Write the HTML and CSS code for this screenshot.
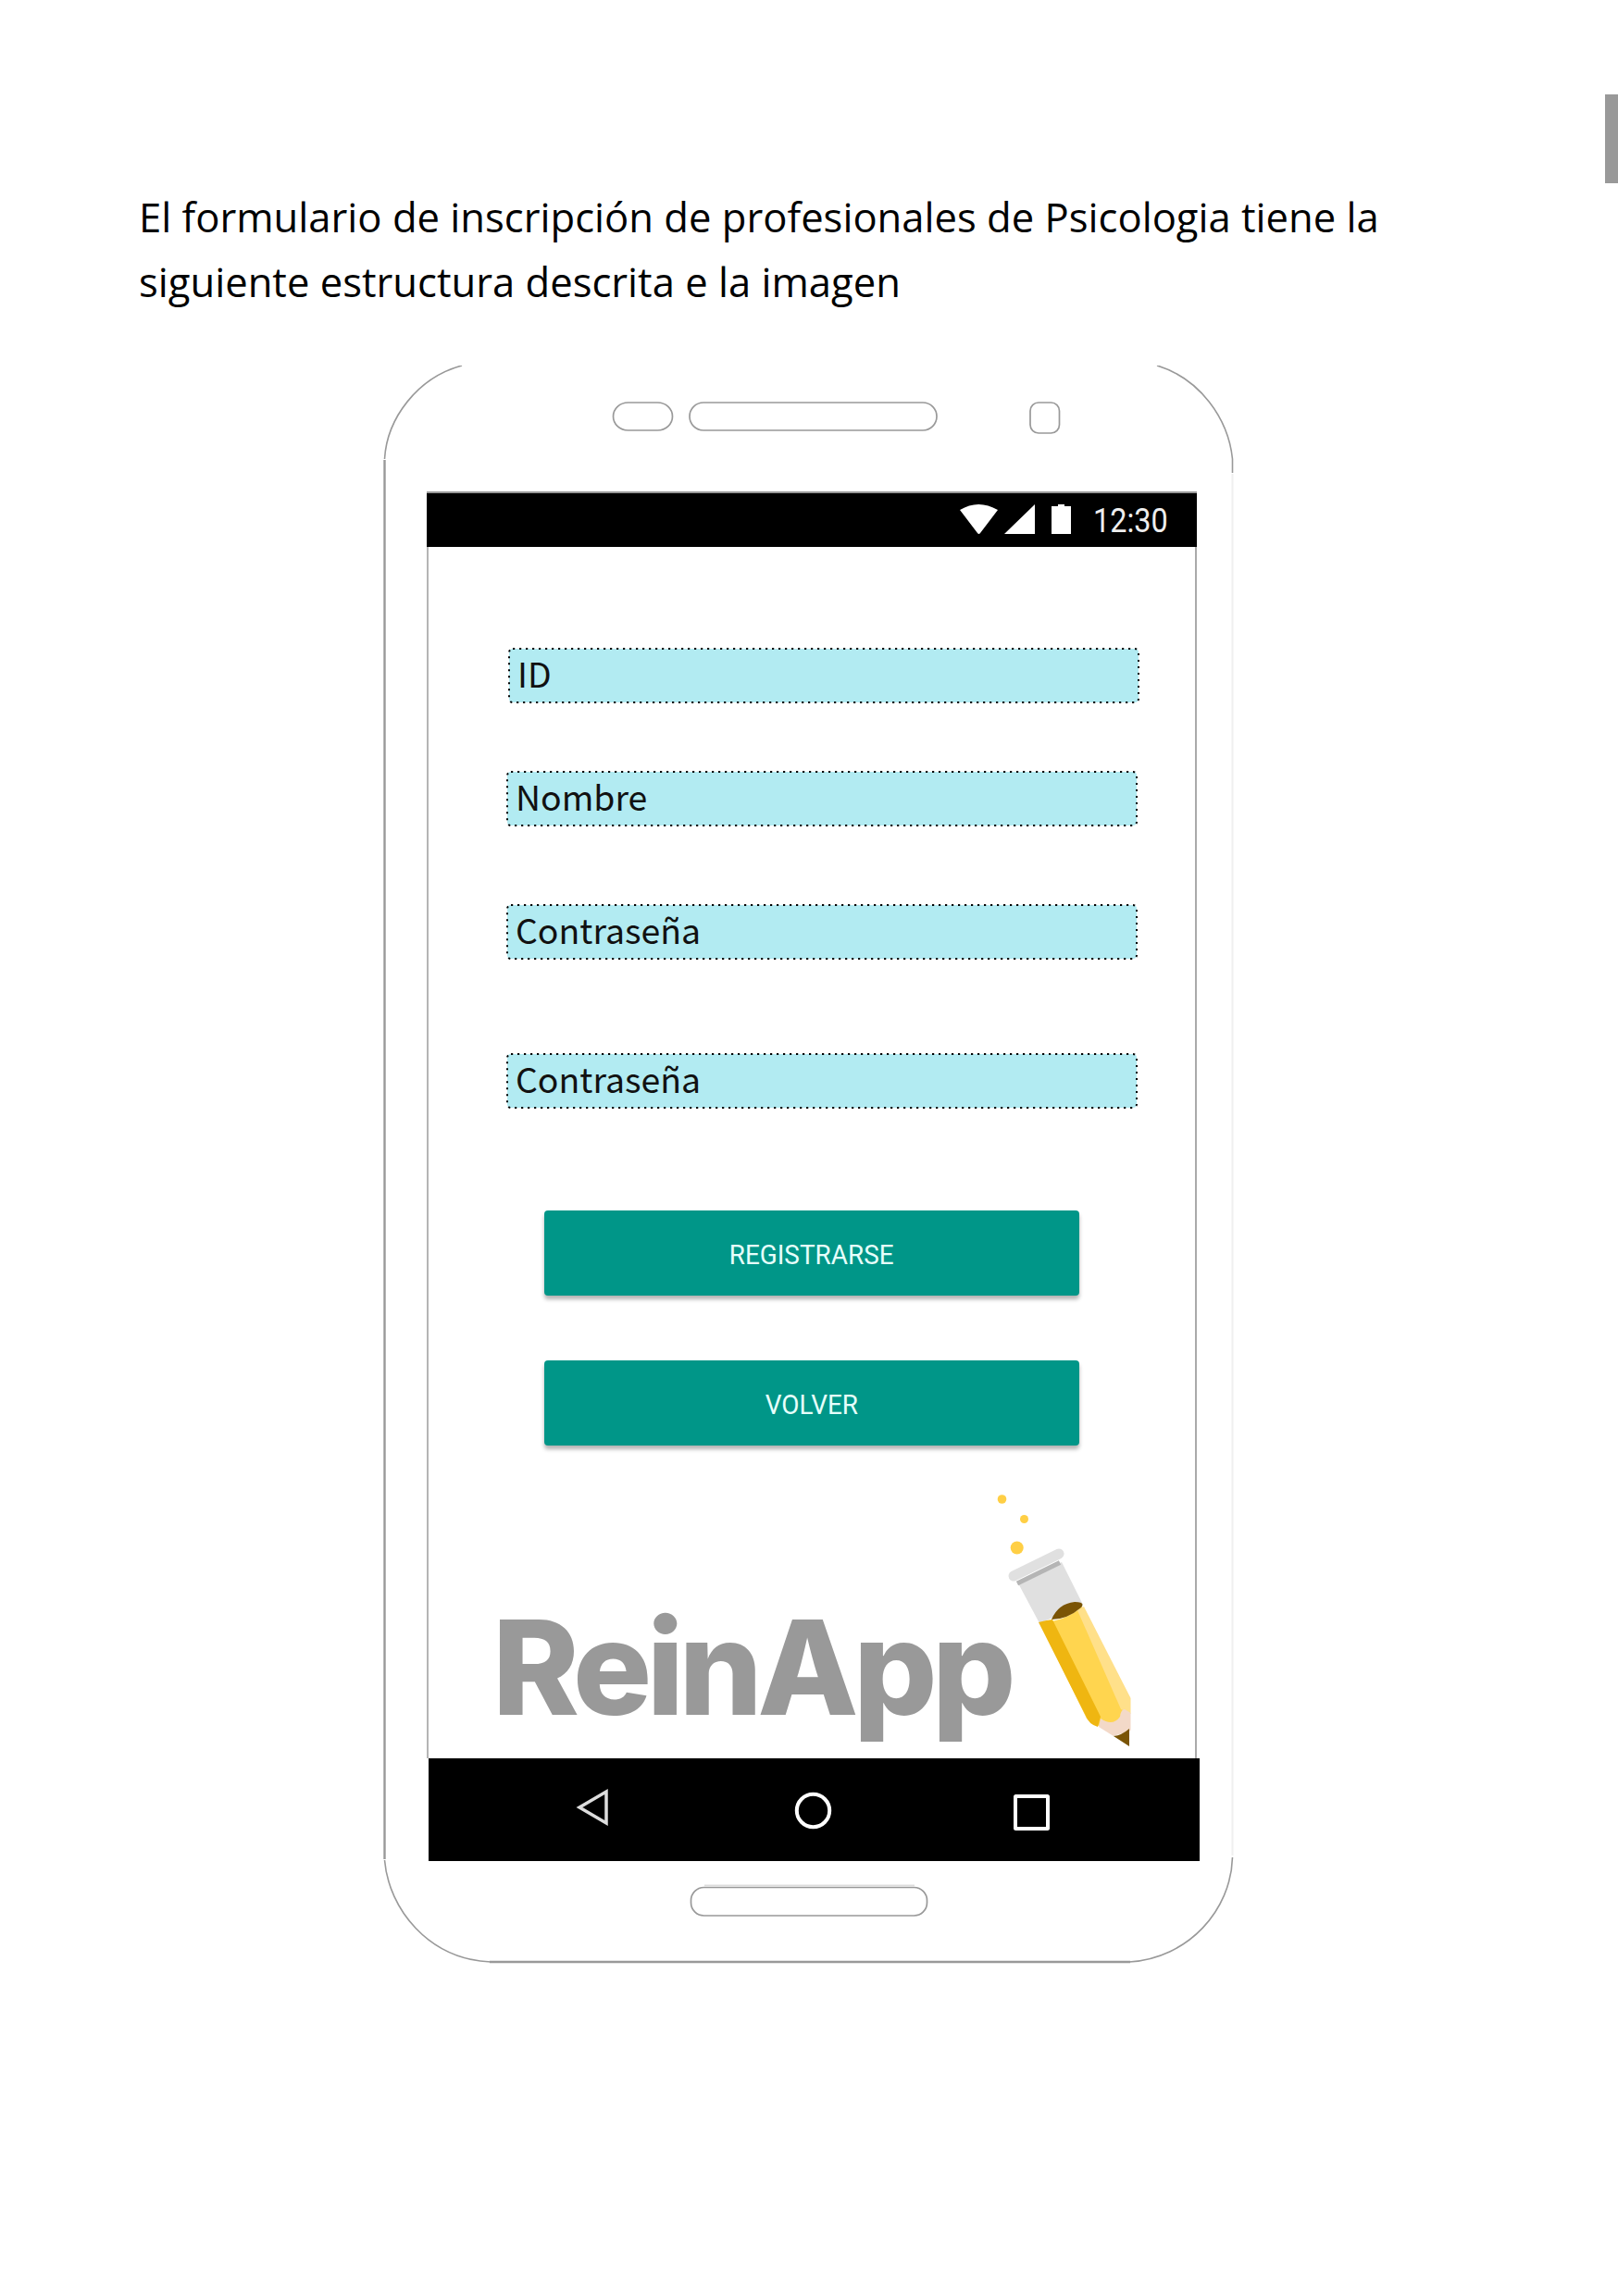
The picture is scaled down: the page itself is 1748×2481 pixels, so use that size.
FILE: index.html
```html
<!DOCTYPE html>
<html lang="es">
<head>
<meta charset="utf-8">
<title>Formulario de inscripción</title>
<link rel="stylesheet" href="styles.css">
</head>
<body>
<div class="page-tab"></div>
<p class="intro"><span class="line line-a">El formulario de inscripción de profesionales de Psicologia tiene la</span><span class="line line-b">siguiente estructura descrita e la imagen</span></p>
<main class="phone">
  <svg class="frame" width="920" height="1728" viewBox="413 395 920 1728" fill="none" stroke="#999">
    <path stroke-width="1.600" d="M499 395C451 408 418 452 415.500 496M1250 395C1296 409 1327 452 1331.500 496V511M415.500 2010C420 2063 463 2117 530 2120M1220 2120C1284 2116 1330 2064 1331.500 2007"/>
    <path stroke-width="2.400" d="M415.500 497V2009M529 2120H1221"/>
    <path stroke="#f0f0f0" stroke-width="2" d="M1331.500 512V2005"/>
    <g stroke-width="1.700">
      <rect x="662.500" y="435" width="64" height="30" rx="16" ry="15"/>
      <rect x="745" y="435" width="267" height="30" rx="15"/>
      <rect x="1113" y="435" width="31.500" height="33" rx="9"/>
      <rect x="746.500" y="2039.500" width="255" height="30.500" rx="14"/>
    </g>
    <path stroke="#ddd" stroke-width="2" d="M761 2037.500H988"/>
  </svg>
  <section class="screen">
    <header class="status">
      <svg width="121" height="32" viewBox="1037 545 121 32" fill="#fff"><path d="M1037 551Q1057 539 1078 551L1059 576Q1057.500 578 1056 576ZM1085 577L1118 545V577ZM1136 547H1143V545H1150V547H1157V577H1136Z"/></svg>
      <span class="clock">12:30</span>
    </header>
    <form class="form">
      <div class="field field-id"><svg class="edge"><rect x="1" y="1" width="680" height="58" rx="4"/></svg><span>ID</span></div>
      <div class="field field-name"><svg class="edge"><rect x="1" y="1" width="680" height="58" rx="4"/></svg><span>Nombre</span></div>
      <div class="field field-pass"><svg class="edge"><rect x="1" y="1" width="680" height="58" rx="4"/></svg><span>Contraseña</span></div>
      <div class="field field-repeat"><svg class="edge"><rect x="1" y="1" width="680" height="58" rx="4"/></svg><span>Contraseña</span></div>
      <button class="btn" type="button"><span class="label-a">REGISTRARSE</span></button>
      <button class="btn" type="button"><span class="label-b">VOLVER</span></button>
    </form>
    <div class="brand">
      <span class="wordmark">ReinApp</span>
      <svg class="pencil" width="160" height="280" viewBox="1080 1610 160 280">
        <g fill="#ffcf45"><circle cx="1082.500" cy="1620" r="4.800"/><circle cx="1106.500" cy="1641.500" r="4.500"/><circle cx="1098.700" cy="1672.500" r="7"/></g>
        <path fill="#e0e0e0" d="M1099 1709L1147 1688L1170 1734L1123 1754Z"/>
        <path stroke="#e0e0e0" stroke-width="11" stroke-linecap="round" d="M1095 1703L1144 1679"/>
        <path stroke="#b5b5b5" stroke-width="5" d="M1099 1711L1145 1688.500"/>
        <path fill="#ffd54f" d="M1123 1753Q1150 1753 1169 1736L1221 1835V1870L1187 1865L1174 1857Z"/>
        <path fill="#ffe08a" d="M1164 1740L1171 1736L1221.500 1835V1852L1211 1847Z"/>
        <path fill="#efb611" d="M1122 1753Q1129 1751 1137 1750L1189 1855L1186 1866Q1176 1863 1173 1854Z"/>
        <path fill="#f3d9c8" d="M1189 1857Q1202 1866 1210 1855Q1211 1847 1215 1847L1221.500 1851V1870L1203 1876L1187 1866Z"/>
        <path fill="#7a5405" d="M1136 1750Q1143 1733 1161 1731Q1173 1731 1168 1737Q1153 1750 1136 1750ZM1203 1876Q1212 1875 1220 1868V1887Z"/>
      </svg>
    </div>
    <nav class="nav">
      <svg width="833" height="111" viewBox="463 1900 833 111" fill="none" stroke="#fff" stroke-width="4">
        <path stroke="#ddd" stroke-width="3.500" d="M626 1953L655 1936V1970Z"/><circle cx="878.500" cy="1956.500" r="17.700"/><rect x="1097" y="1941" width="35" height="35" rx=".5"/>
      </svg>
    </nav>
  </section>
</main>
</body>
</html>
```
FILE: styles.css
```css
body {
  margin: 0;
  width: 1748px;
  height: 2481px;
  background: #fff;
  overflow: hidden;
  display: flow-root;
}
.page-tab {
  width: 14px;
  height: 96px;
  margin: 102px 0 0 auto;
  background: #999;
}
.intro {
  margin: 1px 0 0 150px;
  font: 44px/70px "Open Sans", sans-serif;
  color: #000;
}
.line {
  display: block;
  width: max-content;
  white-space: nowrap;
  transform-origin: 0 50%;
  transform: scaleX(.9905);
}
.phone {
  position: relative;
  width: 920px;
  height: 1728px;
  margin: 56px 0 0 413px;
}
.frame {
  position: absolute;
  inset: 0;
}
.screen {
  position: relative;
  margin-left: 48px;
  padding-top: 136px;
  width: 835px;
}
.status {
  box-sizing: border-box;
  width: 832px;
  height: 60px;
  border-top: 2px solid #999;
  background: #000;
  display: flex;
  align-items: flex-start;
  padding: 12px 0 0 576px;
}
.clock {
  margin: -3px 0 0 23px;
  font: 36px/42px Roboto, sans-serif;
  color: #eee;
  transform-origin: 0 50%;
  transform: scaleX(.9);
}
.form {
  box-sizing: border-box;
  width: 832px;
  height: 1009px;
  border-left: 2px solid #b5b5b5;
  border-right: 2px solid #aaa;
  padding: 109px 0 0 84px;
}
.field {
  position: relative;
  width: 682px;
  height: 60px;
  font: 37.4px/54px "Noto Sans CJK SC", sans-serif;
  color: #111;
}
.field span {
  position: relative;
  display: block;
  padding-left: 10px;
}
.field-id { margin-left: 2px; }
.field-name { margin-top: 73px; }
.field-pass { margin-top: 84px; }
.field-repeat { margin-top: 101px; }
.edge {
  position: absolute;
  inset: 0;
  width: 682px;
  height: 60px;
  fill: #b2ebf2;
  stroke: #000;
  stroke-width: 2;
  stroke-dasharray: 2.2 4.8;
}
.btn {
  display: block;
  width: 578px;
  height: 92px;
  margin: 110px 0 0 41px;
  border: 0;
  border-radius: 4px;
  padding: 4px 0 0;
  background: #009688;
  box-shadow: 0 4px 4px rgba(0, 0, 0, .3);
  font: 30px/36px Roboto, sans-serif;
  color: #e6fffb;
}
.btn + .btn { margin-top: 70px; }
.btn span {
  display: inline-block;
  transform: scaleX(.93);
}
.brand {
  box-sizing: border-box;
  width: 832px;
  height: 300px;
  border-left: 2px solid #b5b5b5;
  border-right: 2px solid #aaa;
  display: flex;
  align-items: flex-start;
}
.wordmark {
  width: 548px;
  margin: 116px 0 0 69px;
  font: 800 142px/170px Inter, sans-serif;
  letter-spacing: -5.5px;
  white-space: nowrap;
  color: #999;
}
.pencil {
  margin-top: 10px;
  overflow: visible;
}
.nav {
  width: 833px;
  height: 111px;
  margin-left: 2px;
  background: #000;
}
.nav svg { display: block; }
```
